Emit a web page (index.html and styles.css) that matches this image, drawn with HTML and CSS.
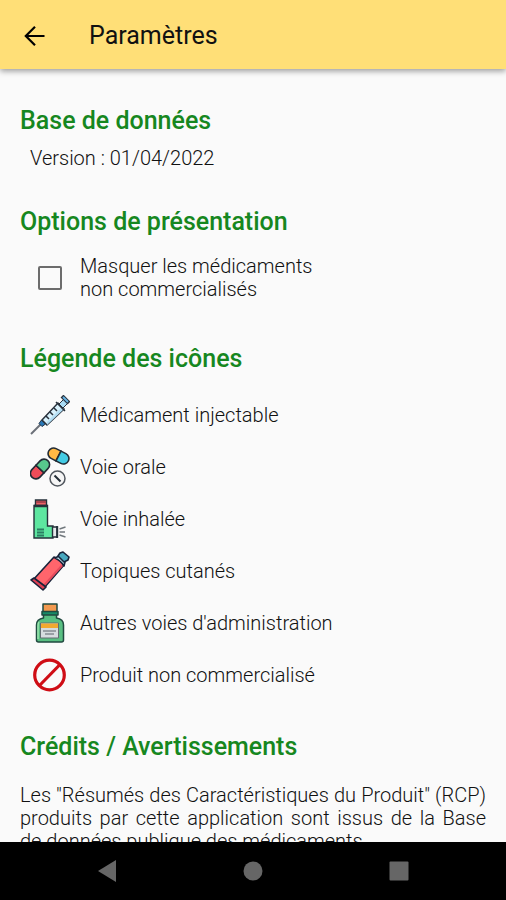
FILE: index.html
```html
<!DOCTYPE html>
<html lang="fr">
<head>
<meta charset="utf-8">
<meta name="viewport" content="width=device-width, initial-scale=1">
<title>Paramètres</title>
<link rel="stylesheet" href="styles.css">
</head>
<body>
<header class="app-bar">
  <button class="back" type="button" aria-label="Retour">
    <svg width="28" height="28" viewBox="0 0 28 28" fill="none" stroke="#000" stroke-width="2.2"><path d="M23.500 14H5M14 4.800L4.800 14l9.200 9.200"/></svg>
  </button>
  <h1>Paramètres</h1>
</header>
<main class="content">
  <section>
    <h2>Base de données</h2>
    <p class="version">Version : 01/04/2022</p>
  </section>
  <section>
    <h2>Options de présentation</h2>
    <label class="option"><input type="checkbox"><span>Masquer les médicaments<br>non commercialisés</span></label>
  </section>
  <section>
    <h2>Légende des icônes</h2>
    <ul class="legend">
      <li>
        <svg viewBox="0 0 40 40"><path d="M1 39L11 29" stroke="#6b7078" stroke-width="2"/><path d="M11.500 25l4 4-3.500 2.500-3-3z" fill="#2878b8" stroke="#23364a"/><path d="M12 25L28 8l6 6-17 16z" fill="#d8f1fc" stroke="#28313c" stroke-width="1.500"/><path d="M17 27L32 12l2 2-17 16z" fill="#b4dff5"/><path d="M16 21l3 3M20 17l3 3M24 13l3 3" stroke="#28313c" stroke-width="1.500"/><path d="M29 9l5-5 4 4-5 5z" fill="#a9dcf5" stroke="#28313c"/><path d="M32 1l7 7" stroke="#28313c" stroke-width="4"/><path d="M33 2l5 5" stroke="#67b4e4" stroke-width="2"/><path d="M26 7l9 9" stroke="#28313c" stroke-width="1.500"/></svg>
        <span>Médicament injectable</span>
      </li>
      <li>
        <svg viewBox="0 0 40 40" stroke="#222b35" stroke-width="1.600"><g transform="rotate(27 28.500 9)"><path d="M28.500 3.500H23a5.500 5.500 0 0 0 0 11h5.500z" fill="#ffb944"/><path d="M28.500 3.500H34a5.500 5.500 0 0 1 0 11h-5.500z" fill="#43cbe4"/></g><g transform="rotate(-47 10 22)"><path d="M10 16.500H4a5.500 5.500 0 0 0 0 11h6z" fill="#ef4c59"/><path d="M10 16.500h6a5.500 5.500 0 0 1 0 11h-6z" fill="#57c98d"/></g><circle cx="27.500" cy="31.500" r="7.500" fill="#f5f5f5" stroke="#50565d" stroke-width="1.500"/><path d="M24.500 28.500l6 6" stroke-width="2"/></svg>
        <span>Voie orale</span>
      </li>
      <li>
        <svg viewBox="0 0 40 40" stroke="#24313a" stroke-width="1.400"><path d="M5.500 1h11v6h-11z" fill="#ed6268"/><path d="M6 2h10v2H6z" fill="#a9434d" stroke="none"/><path d="M4 6.500h13.500V27H23v12H4z" fill="#5de6a0"/><path d="M4 7h13.500" stroke-width="2.500"/><path d="M7 30.500h7M7 33.500h7M7 36.500h7" stroke="#2b7d62" stroke-width="1.800"/><path d="M22.500 28h5v10h-5z" fill="#e6e9ec"/><path d="M27 27v12" stroke-width="1.800"/><path d="M29.500 30l6-2M29.500 33h5.500M29.500 36l6 2" fill="none" stroke="#70777c"/></svg>
        <span>Voie inhalée</span>
      </li>
      <li>
        <svg viewBox="0 0 40 40" stroke="#18233a" stroke-width="1.600" stroke-linejoin="round"><path d="M3 29L24 6q6 2 10 8L14 37z" fill="#ff656c"/><path d="M13 34L31 14l2 1-19 21z" fill="#e64a5c" stroke="none"/><path d="M1 29l3-2 12 9-3 3z" fill="#df4054"/><path d="M25 7l4-2 6 6-1 4q-3-5-9-8z" fill="#bce5ef"/><path d="M30 2l3-1 6 5-1 3-4 2-6-6z" fill="#48a8bf"/></svg>
        <span>Topiques cutanés</span>
      </li>
      <li>
        <svg viewBox="0 0 40 40" stroke="#214a40" stroke-width="1.500" stroke-linejoin="round"><path d="M13 1h14v8H13z" fill="#f39a50"/><path d="M13.500 9h13v6q7 1 7 7v15q0 2-2 2h-23q-2 0-2-2V22q0-6 7-7z" fill="#59bf82"/><path d="M12 8.500h16v3.500H12z" fill="#188c67"/><path d="M9 19q-1 1-1 4v13" fill="none" stroke="#9be4ae"/><path d="M10.500 20h18v15h-18z" fill="#d7dce0" stroke="#646d73" stroke-width="1"/><path d="M11 20.500h17V25H11z" fill="#f3a930" stroke="none"/><path d="M13 28h13M15 31h9" stroke="#858b91"/></svg>
        <span>Autres voies d'administration</span>
      </li>
      <li>
        <svg viewBox="0 0 40 40" fill="none" stroke="#cf0d15" stroke-width="3.200"><circle cx="19.500" cy="20" r="14.800"/><path d="M9.500 30.500L30 9.500"/></svg>
        <span>Produit non commercialisé</span>
      </li>
    </ul>
  </section>
  <section>
    <h2>Crédits / Avertissements</h2>
    <p class="credits">Les "Résumés des Caractéristiques du Produit" (RCP) produits par cette application sont issus de la Base de données publique des médicaments.</p>
  </section>
</main>
<nav class="system-bar">
  <button type="button" aria-label="Précédent"><svg viewBox="0 0 24 24"><path d="M3 12L21 1v22z"/></svg></button>
  <button type="button" aria-label="Accueil"><svg viewBox="0 0 24 24"><circle cx="12" cy="12" r="9.500"/></svg></button>
  <button type="button" aria-label="Récents"><svg viewBox="0 0 24 24"><rect x="2.500" y="2.500" width="19" height="19" rx="1"/></svg></button>
</nav>
</body>
</html>
```
FILE: styles.css
```css
* {
  box-sizing: border-box;
}

body {
  margin: 0;
  height: 100vh;
  display: flex;
  flex-direction: column;
  background: #fafafa;
  color: #111;
  font: 300 20px/23px Roboto, sans-serif;
}

h1, h2, p, ul {
  margin: 0;
  padding: 0;
}

button {
  padding: 0;
  border: 0;
  background: none;
}

svg {
  display: block;
}

.app-bar {
  flex: none;
  display: flex;
  align-items: center;
  gap: 40px;
  padding: 21px 21px 19px;
  background: #ffdf77;
  box-shadow: 0 2px 6px rgba(0, 0, 0, 0.4);
  z-index: 1;
}

.back {
  width: 28px;
}

h1 {
  font-size: 25px;
  line-height: 29px;
  font-weight: 400;
}

.content {
  flex: 1;
  min-height: 0;
  overflow: hidden;
  display: flex;
  flex-direction: column;
  gap: 38px;
  padding: 38px 20px 0;
}

section {
  flex: none;
}

h2 {
  color: #168720;
  font-size: 25px;
  line-height: 28px;
  font-weight: 500;
}

.version {
  padding: 12px 10px 0;
}

.option {
  display: flex;
  align-items: center;
  gap: 18px;
  padding: 19px 0 6px 18px;
}

.option input {
  appearance: none;
  flex: none;
  width: 24px;
  height: 24px;
  margin: 0;
  border: 2px solid #6c6c6c;
  border-radius: 2px;
}

.legend {
  display: grid;
  gap: 12px;
  padding: 22px 10px 0;
  list-style: none;
}

.legend li {
  display: flex;
  align-items: center;
  gap: 10px;
}

.legend svg {
  flex: none;
  width: 40px;
  height: 40px;
}

.credits {
  padding-top: 23px;
  text-align: justify;
}

.system-bar {
  flex: none;
  display: flex;
  justify-content: center;
  gap: 122px;
  padding: 17px 0;
  background: #000;
}

.system-bar svg {
  width: 24px;
  height: 24px;
  fill: #666;
}
```
